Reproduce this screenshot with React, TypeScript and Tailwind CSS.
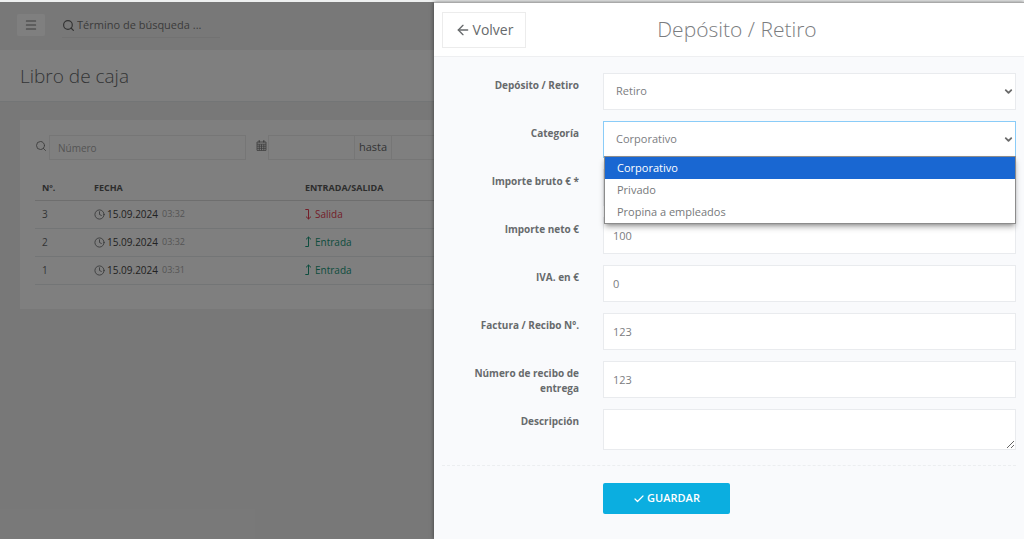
import React, { useState } from 'react';
import { ArrowLeft, Check, ChevronDown, Clock, Menu, Search } from 'lucide-react';

interface Entry {
  id: number;
  date: string;
  time: string;
  type: 'in' | 'out';
}

const ENTRIES: Entry[] = [
  { id: 3, date: '15.09.2024', time: '03:32', type: 'out' },
  { id: 2, date: '15.09.2024', time: '03:32', type: 'in' },
  { id: 1, date: '15.09.2024', time: '03:31', type: 'in' },
];

const CATEGORIES = ['Corporativo', 'Privado', 'Propina a empleados'];

const fieldClass =
  'block w-full h-[37px] border border-[#e9ebee] bg-white text-[11px] text-[#7b7d7f] outline-none';

const OutArrow = () => (
  <svg viewBox="0 0 7 12" className="w-[7px] h-[12px]" fill="none" stroke="currentColor">
    <path d="M0.3 1.5H3.5V11M1 8.6L3.5 11L6 8.6" />
  </svg>
);

const InArrow = () => (
  <svg viewBox="0 0 7 12" className="w-[7px] h-[12px]" fill="none" stroke="currentColor">
    <path d="M0.3 10.5H3.5V1M1 3.4L3.5 1L6 3.4" />
  </svg>
);

const CalendarIcon = () => (
  <svg viewBox="0 0 11 11" className="w-[11px] h-[11px]" fill="none" stroke="currentColor" strokeWidth="0.8">
    <path d="M1 2H10V10.4H1ZM1 4.2H10M1 6.2H10M1 8.3H10M3.3 4.2V10.4M5.5 4.2V10.4M7.8 4.2V10.4" />
    <path d="M3.2 0.3V2.4M7.8 0.3V2.4" strokeWidth="1.2" />
  </svg>
);

const CashBook: React.FC = () => (
  <div className="flex-1 bg-[#f1f1f1]">
    <header className="flex items-start h-12 pl-[17px] pt-3">
      <button type="button" aria-label="Menú" className="flex items-center justify-center w-7 h-[22px] rounded-xs bg-white text-[#777]">
        <Menu className="w-[14px] h-[14px]" strokeWidth={1.8} />
      </button>
      <label className="flex items-center w-[158px] h-6 ml-[17px] border-b border-[#e4e4e4] text-[#666]">
        <Search className="w-[13px] h-[13px] mr-[2px] shrink-0" strokeWidth={2.2} />
        <input
          type="text"
          aria-label="Buscar"
          placeholder="Término de búsqueda ..."
          className="min-w-0 flex-1 text-[11px] outline-none placeholder:text-[#777]"
        />
      </label>
    </header>

    <div className="h-[52px] px-5 bg-white border-b border-[#e7eaec]">
      <h1 className="text-[19px] leading-[52px] font-light text-[#676a6c]">Libro de caja</h1>
    </div>

    <main className="mx-5 mt-[18px] px-[15px] pt-[15px] pb-6 bg-white">
      <form className="flex items-center h-[25px] text-[#777]">
        <Search className="w-[12px] h-[12px] mr-[2px] mb-1 shrink-0" strokeWidth={1.8} />
        <input
          type="text"
          aria-label="Número"
          placeholder="Número"
          className="w-[197px] h-[25px] px-2 border border-[#ececec] text-[10px] outline-none placeholder:text-[#aaa]"
        />
        <div className="ml-[10px] mr-px mb-1">
          <CalendarIcon />
        </div>
        <input type="text" aria-label="Desde" className="w-[87px] h-[25px] border border-[#ececec] outline-none" />
        <span className="flex items-center justify-center w-9 h-[25px] border-y border-[#ececec] text-[11px] text-[#676a6c]">
          hasta
        </span>
        <input type="text" aria-label="Hasta" className="w-[87px] h-[25px] border border-[#ececec] outline-none" />
      </form>

      <table className="w-full mt-[15px] table-fixed text-left text-[#676a6c]">
        <thead>
          <tr className="h-[25px] border-b border-[#ddd] text-[9px] text-[#5a5a5a]">
            <th className="w-[52px] px-[7px] font-bold">Nº.</th>
            <th className="w-[211px] px-[7px] font-bold">FECHA</th>
            <th className="px-[7px] font-bold">ENTRADA/SALIDA</th>
          </tr>
        </thead>
        <tbody>
          {ENTRIES.map(entry => (
            <tr key={entry.id} className="h-7 border-b border-[#e7eaec] text-[10px]">
              <td className="px-[7px]">{entry.id}</td>
              <td className="px-[7px]">
                <span className="flex items-center">
                  <Clock className="w-[11px] h-[11px] mr-[2px]" strokeWidth={1.8} />
                  <span className="text-[#444]">{entry.date}</span>
                  <span className="ml-1 text-[9px] text-[#aaa]">{entry.time}</span>
                </span>
              </td>
              <td className={`px-[7px] ${entry.type === 'out' ? 'text-[#e83d52]' : 'text-[#1a9a7c]'}`}>
                <span className="flex items-center gap-[3px]">
                  {entry.type === 'out' ? <OutArrow /> : <InArrow />}
                  {entry.type === 'out' ? 'Salida' : 'Entrada'}
                </span>
              </td>
            </tr>
          ))}
        </tbody>
      </table>
    </main>
  </div>
);

interface FieldProps {
  id: string;
  label: string;
  children: React.ReactNode;
}

const Field: React.FC<FieldProps> = ({ id, label, children }) => (
  <div className="grid grid-cols-[137px_1fr] gap-x-6">
    <label htmlFor={id} className="h-0 pt-[5px] text-right text-[10px] leading-[15px] font-bold text-[#676a6c]">
      {label}
    </label>
    <div className="relative">{children}</div>
  </div>
);

const SelectArrow = () => (
  <ChevronDown className="absolute right-[2px] top-[13px] w-[11px] h-[11px] text-[#6b6b6b] pointer-events-none" strokeWidth={4} />
);

const MovementForm: React.FC = () => {
  const [category, setCategory] = useState(CATEGORIES[0]);
  const [open, setOpen] = useState(true);

  const pick = (name: string) => {
    setCategory(name);
    setOpen(false);
  };

  return (
    <form className="flex flex-col gap-[11px] px-2 pt-4" onSubmit={e => e.preventDefault()}>
      <Field id="movement" label="Depósito / Retiro">
        <select id="movement" defaultValue="Retiro" className={`${fieldClass} appearance-none px-3`}>
          <option>Depósito</option>
          <option>Retiro</option>
        </select>
        <SelectArrow />
      </Field>

      <Field id="category" label="Categoría">
        <select
          id="category"
          value={category}
          onChange={e => pick(e.target.value)}
          className="block w-full h-[37px] appearance-none px-3 border border-[#8accf8] bg-white text-[11px] text-[#7b7d7f] outline-none"
        >
          {CATEGORIES.map(name => (
            <option key={name}>{name}</option>
          ))}
        </select>
        <SelectArrow />
        {open && (
          <ul
            role="listbox"
            aria-label="Categoría"
            className="absolute z-10 top-[35px] left-px right-0 border border-[#8c8c8c] bg-white shadow-md shadow-black/30"
          >
            {CATEGORIES.map(name => (
              <li
                key={name}
                role="option"
                aria-selected={name === category}
                onClick={() => pick(name)}
                className={`h-[22px] px-3 text-[11px] leading-[22px] ${
                  name === category ? 'bg-[#1967d2] text-white' : 'text-[#76787a]'
                }`}
              >
                {name}
              </li>
            ))}
          </ul>
        )}
      </Field>

      <Field id="gross" label="Importe bruto € *">
        <input id="gross" type="text" className={`${fieldClass} px-[9px]`} />
      </Field>
      <Field id="net" label="Importe neto €">
        <input id="net" type="text" defaultValue="100" className={`${fieldClass} px-[9px]`} />
      </Field>
      <Field id="vat" label="IVA. en €">
        <input id="vat" type="text" defaultValue="0" className={`${fieldClass} px-[9px]`} />
      </Field>
      <Field id="invoice" label="Factura / Recibo Nº.">
        <input id="invoice" type="text" defaultValue="123" className={`${fieldClass} px-[9px]`} />
      </Field>
      <Field id="delivery" label="Número de recibo de entrega">
        <input id="delivery" type="text" defaultValue="123" className={`${fieldClass} px-[9px]`} />
      </Field>
      <Field id="description" label="Descripción">
        <textarea
          id="description"
          className="block w-full h-[41px] px-[9px] py-2 border border-[#e9ebee] bg-white text-[11px] text-[#7b7d7f] outline-none resize"
        />
      </Field>

      <div className="mt-1 pt-[17px] pl-[161px] border-t border-dashed border-[#eceef0]">
        <button
          type="submit"
          className="flex items-center justify-center gap-[2px] w-[127px] h-[31px] rounded-xs bg-[#0baee0] text-[11px] font-semibold text-white"
        >
          <Check className="w-3 h-3" strokeWidth={2.4} />
          GUARDAR
        </button>
      </div>
    </form>
  );
};

const App: React.FC = () => (
  <div className="relative flex flex-col min-h-screen border-t-2 border-[#eef0f0] font-['Open_Sans',sans-serif]">
    <CashBook />

    {/* Drawer over the dimmed cash book */}
    <div className="absolute inset-0 flex justify-end bg-black/50">
      <section className="w-[590px] max-w-full border-t border-[#a9a9a9] bg-[#f9fafc] shadow-[0_0_4px_rgba(0,0,0,0.5)]">
        <header className="flex items-center h-[54px] px-2 border-b border-[#eeeff1] bg-white">
          <button
            type="button"
            className="flex items-center justify-center gap-[2px] w-[84px] h-9 border border-[#ececec] text-[14px] text-[#676a6c]"
          >
            <ArrowLeft className="w-4 h-4" strokeWidth={2} />
            Volver
          </button>
          <h2 className="flex-1 pr-[68px] text-center text-[21px] font-light text-[#7b7d7f]">Depósito / Retiro</h2>
        </header>
        <MovementForm />
      </section>
    </div>
  </div>
);

export default App;
